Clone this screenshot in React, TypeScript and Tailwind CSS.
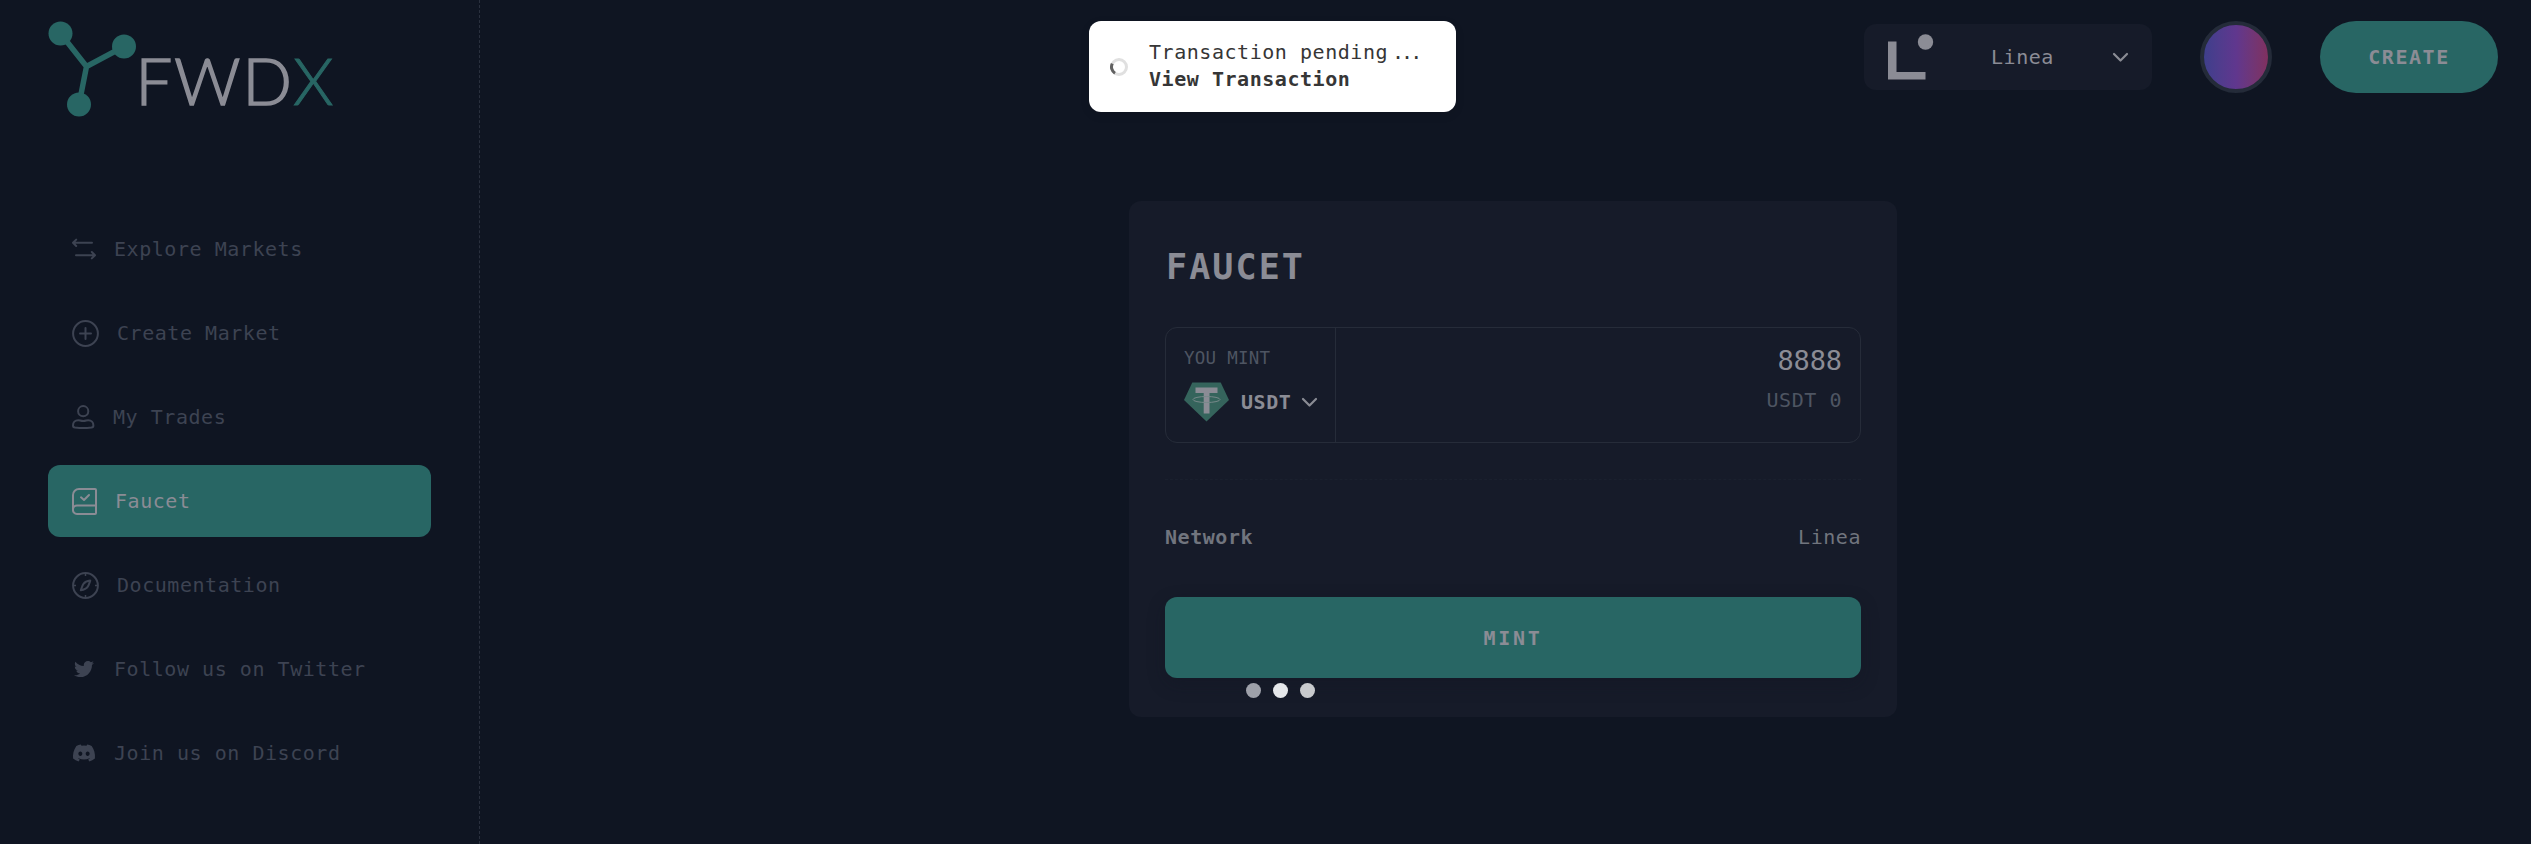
import { type ReactNode } from 'react';
import { FaDiscord, FaTwitter } from 'react-icons/fa';

interface NavItem {
    label: string;
    icon: ReactNode;
    active?: boolean;
}

const SwapIcon = () => (
    <svg width="24" height="22" viewBox="0 0 24 22" fill="none" stroke="currentColor" strokeWidth="2" strokeLinecap="round" strokeLinejoin="round">
        <path d="M20 4.8H1.2M4.2 1.6 1 4.8l3.2 3.2M4 17.2h18.8M19.8 14l3.2 3.2-3.2 3.2" />
    </svg>
);

const PlusIcon = () => (
    <svg width="27" height="27" viewBox="0 0 27 27" fill="none" stroke="currentColor" strokeWidth="2" strokeLinecap="round">
        <circle cx="13.5" cy="13.5" r="12.4" />
        <path d="M13.5 8v11M8 13.5h11" />
    </svg>
);

const UserIcon = () => (
    <svg width="23" height="24" viewBox="0 0 23 24" fill="none" stroke="currentColor" strokeWidth="2" strokeLinejoin="round">
        <circle cx="11.2" cy="6.2" r="5.1" />
        <path d="M6.3 15.2c1.6 0 2.4.9 4.9.9s3.4-.9 5-.9c3.3 0 5.2 2.4 5.2 5.2 0 1.5-.8 2-2 2.2-4.8.6-11.6.6-16.4 0-1.2-.2-2-.7-2-2.2 0-2.8 1.9-5.2 5.2-5.2z" />
    </svg>
);

const BookIcon = () => (
    <svg width="25" height="27" viewBox="0 0 25 27" fill="none" stroke="currentColor" strokeWidth="2" strokeLinecap="round" strokeLinejoin="round">
        <path d="M1 21.5V7a6 6 0 0 1 6-6h16a1 1 0 0 1 1 1v23a1 1 0 0 1-1 1H5a4 4 0 0 1-4-4.500C1 19 3 17.6 5 17.6h19" />
        <path d="m9 9.3 3 2.7 5-5" />
    </svg>
);

const CompassIcon = () => (
    <svg width="27" height="27" viewBox="0 0 27 27" fill="none" stroke="currentColor" strokeWidth="2" strokeLinejoin="round">
        <circle cx="13.5" cy="13.5" r="12.4" />
        <path d="M13.5 1v3M13.5 23v3M1 13.5h3M23 13.5h3" strokeWidth="1.5" />
        <path d="M18.3 8.6c-3.8.6-5.6 1.6-6.8 3.2-1.1 1.6-1.5 3.2-2.7 6.5 3.8-.8 5.6-1.7 6.8-3.4 1.1-1.5 1.7-3.500 2.700-6.300z" />
    </svg>
);

const ChevronIcon = () => (
    <svg width="17" height="11" viewBox="0 0 17 11" fill="none" stroke="#8a8c94" strokeWidth="2.2" strokeLinecap="round" strokeLinejoin="round">
        <path d="m2 2 6.5 6.5L15 2" />
    </svg>
);

const Logo = () => (
    <svg width="290" height="116" viewBox="48 21 290 116" className="shrink-0 overflow-visible">
        <path d="M60.5 33.5 86.5 66.5 124 46.5M86.5 66.5 79 104.5" fill="none" stroke="#286664" strokeWidth="5.5" strokeLinejoin="round" />
        <g fill="#286664">
            <circle cx="60.5" cy="33.5" r="12" />
            <circle cx="124" cy="46.5" r="12" />
            <circle cx="79" cy="104.5" r="12" />
        </g>
        <g fontFamily="Lato, sans-serif" fontWeight="300" fontSize="65">
            <text x="135.5" y="105" textLength="157" lengthAdjust="spacing" fill="#8b8c95" stroke="#8b8c95" strokeWidth="1.6">FWD</text>
            <text x="293" y="105" fill="#286664" stroke="#286664">X</text>
        </g>
    </svg>
);

const LineaIcon = () => (
    <svg width="46" height="46" viewBox="0 0 46 46" fill="#8b8c95">
        <path d="M0 7.5h8.5v30.5H37.5v7.5H0z" />
        <circle cx="37.500" cy="8" r="7.700" />
    </svg>
);

const TetherIcon = () => (
    <svg width="45" height="40" viewBox="0 0 45 40">
        <path d="M8.3.5h28.4L45 18 22.5 39.5 0 18z" fill="#35645c" />
        <path d="M11.5 5.5h22v5.5h-8v20.5h-5.8V11h-8.2z" fill="#8b8c95" />
        <ellipse cx="22.5" cy="17.5" rx="13.5" ry="3" fill="none" stroke="#77898a" strokeWidth="1" />
    </svg>
);

const navItems: NavItem[] = [
    { label: 'Explore Markets', icon: <SwapIcon /> },
    { label: 'Create Market', icon: <PlusIcon /> },
    { label: 'My Trades', icon: <UserIcon /> },
    { label: 'Faucet', icon: <BookIcon />, active: true },
    { label: 'Documentation', icon: <CompassIcon /> },
    { label: 'Follow us on Twitter', icon: <span className="flex w-6 justify-center"><FaTwitter size={20} /></span> },
    { label: 'Join us on Discord', icon: <FaDiscord size={24} /> },
];

function Sidebar() {
    return (
        <aside className="flex w-[480px] shrink-0 flex-col border-r border-dashed border-[#2a303e] px-12 pt-[21px]">
            <Logo />
            <nav className="mt-[76px] flex flex-col gap-3">
                {navItems.map((item) => (
                    <a
                        key={item.label}
                        className={`flex h-[72px] w-[383px] items-center gap-[18px] rounded-xl px-6 ${item.active ? 'bg-[#286664] text-[#8b8c95]' : 'text-[#3d4352]'}`}
                    >
                        {item.icon}
                        <span>{item.label}</span>
                    </a>
                ))}
            </nav>
        </aside>
    );
}

function Header() {
    return (
        <header className="flex h-[93px] items-end justify-end gap-12 pr-[33px]">
            <div className="mb-[3px] flex h-[66px] w-[288px] items-center rounded-xl bg-[#161b29] pr-[23px] pl-6 text-[#8b8c95]">
                <LineaIcon />
                <span className="ml-[57px] flex-1">Linea</span>
                <ChevronIcon />
            </div>
            <div className="size-[72px] rounded-full border-4 border-[#242b39] bg-linear-to-r from-[#3e3f8c] via-[#60378e] to-[#80305f]" />
            <button className="h-[72px] w-[178px] rounded-full bg-[#286664] font-bold tracking-[1.55px] text-[#8b8c95]">CREATE</button>
        </header>
    );
}

function FaucetCard() {
    return (
        <section className="flex h-[516px] w-[768px] flex-col rounded-xl bg-[#161b29] px-9 pt-[42px]">
            <h1 className="pl-px text-[35px] leading-[48px] font-bold tracking-[2.1px] text-[#8b8c95]">FAUCET</h1>

            <div className="mt-[36px] flex h-[116px] shrink-0 rounded-xl border border-[#262c39]">
                <div className="flex w-[170px] flex-col border-r border-[#262c39] pt-4 pl-[18px]">
                    <span className="text-[17.5px] leading-[28px] tracking-[0.25px] text-[#4e5562]">YOU MINT</span>
                    <div className="mt-[10px] flex items-center gap-3">
                        <TetherIcon />
                        <div className="flex items-center gap-[10px] font-bold text-[#8b8c95]">
                            <span>USDT</span>
                            <ChevronIcon />
                        </div>
                    </div>
                </div>
                <div className="flex flex-1 flex-col items-end pt-[15px] pr-[18px]">
                    <span className="text-[27px] leading-[36px] tracking-[-0.1px] text-[#8b8c95]">8888</span>
                    <span className="mt-[5px] leading-[32px] text-[#4e5562]">USDT 0</span>
                </div>
            </div>

            <div className="mt-[36px] border-t border-dashed border-[#1a202e]" />

            <div className="mt-[41px] flex justify-between leading-[32px] text-[#71757e]">
                <span className="font-bold">Network</span>
                <span>Linea</span>
            </div>

            <button className="mt-[44px] h-[81px] shrink-0 rounded-xl bg-[#286664] font-bold tracking-[2.7px] text-[#8b8c95] shadow-[0_6px_18px_rgba(15,20,34,0.3)]">MINT</button>

            {/* Loading dots */}
            <div className="mt-[5px] ml-[81px] flex gap-3">
                <span className="size-[15px] rounded-full bg-[#9ea1aa]" />
                <span className="size-[15px] rounded-full bg-[#e5e7ea]" />
                <span className="size-[15px] rounded-full bg-[#c8cacd]" />
            </div>
        </section>
    );
}

function Toast() {
    return (
        <div className="absolute top-[21px] left-[1089px] flex h-[91px] w-[367px] items-center rounded-xl bg-white pl-[21px] text-[#363636] shadow-[0_3px_10px_rgba(0,0,0,0.1)]">
            <svg width="18" height="18" viewBox="0 0 18 18" fill="none" strokeWidth="3">
                <circle cx="9" cy="9" r="7.5" stroke="#e0e0e0" />
                <path d="M5 15.3A7.5 7.5 0 0 1 2.3 5.6" stroke="#616161" />
            </svg>
            <div className="ml-[21px] pb-[2px] leading-[27px]">
                <div>
                    Transaction pending<span className="ml-1 tracking-[-3px]">...</span>
                </div>
                <div className="font-bold">View Transaction</div>
            </div>
        </div>
    );
}

export default function App() {
    return (
        <div className="relative flex h-[844px] w-[2531px] overflow-hidden bg-[#0f1522] font-['DejaVu_Sans_Mono',monospace] text-[20px] tracking-[0.54px]">
            <Sidebar />
            <main className="flex flex-1 flex-col">
                <Header />
                <div className="flex justify-center pt-[108px] pl-[15px]">
                    <FaucetCard />
                </div>
            </main>
            <Toast />
        </div>
    );
}
